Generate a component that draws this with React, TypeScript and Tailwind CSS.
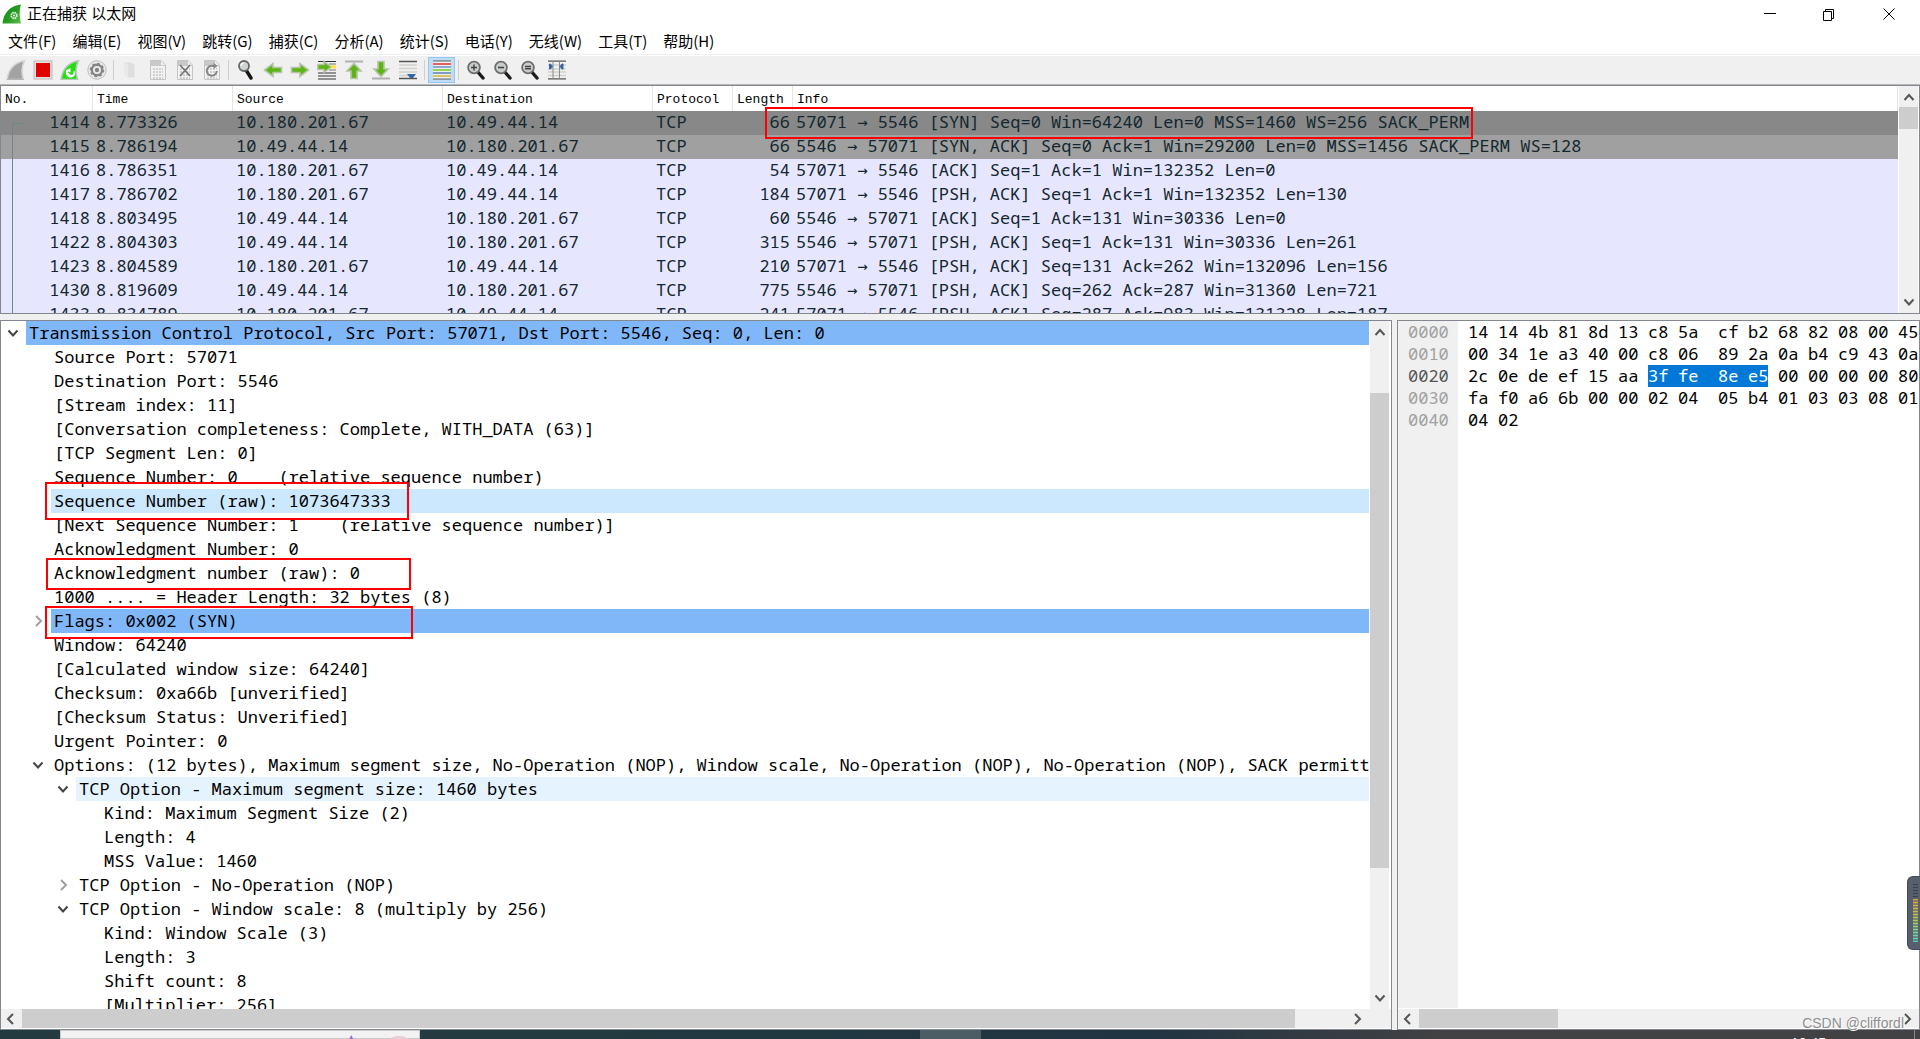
import type { ReactNode } from "react";

type Packet = {
  no: string;
  time: string;
  source: string;
  destination: string;
  length: number;
  info: string;
  row: string;
};

type TreeItem = {
  level: number;
  text: string;
  open?: boolean;
  bg?: string;
};

const HOST_A = "10.180.201.67";
const HOST_B = "10.49.44.14";

const menus = ["文件(F)", "编辑(E)", "视图(V)", "跳转(G)", "捕获(C)", "分析(A)", "统计(S)", "电话(Y)", "无线(W)", "工具(T)", "帮助(H)"];

const columns = [
  { name: "No.", width: "w-[92px]" },
  { name: "Time", width: "w-[140px]" },
  { name: "Source", width: "w-[210px]" },
  { name: "Destination", width: "w-[210px]" },
  { name: "Protocol", width: "w-[80px]" },
  { name: "Length", width: "w-[60px]" },
  { name: "Info", width: "" },
];

const packets: Packet[] = [
  { no: "1414", time: "8.773326", source: HOST_A, destination: HOST_B, length: 66, info: "57071 → 5546 [SYN] Seq=0 Win=64240 Len=0 MSS=1460 WS=256 SACK_PERM", row: "bg-[#888888]" },
  { no: "1415", time: "8.786194", source: HOST_B, destination: HOST_A, length: 66, info: "5546 → 57071 [SYN, ACK] Seq=0 Ack=1 Win=29200 Len=0 MSS=1456 SACK_PERM WS=128", row: "bg-[#a0a0a0]" },
  { no: "1416", time: "8.786351", source: HOST_A, destination: HOST_B, length: 54, info: "57071 → 5546 [ACK] Seq=1 Ack=1 Win=132352 Len=0", row: "bg-[#e7e6ff]" },
  { no: "1417", time: "8.786702", source: HOST_A, destination: HOST_B, length: 184, info: "57071 → 5546 [PSH, ACK] Seq=1 Ack=1 Win=132352 Len=130", row: "bg-[#e7e6ff]" },
  { no: "1418", time: "8.803495", source: HOST_B, destination: HOST_A, length: 60, info: "5546 → 57071 [ACK] Seq=1 Ack=131 Win=30336 Len=0", row: "bg-[#e7e6ff]" },
  { no: "1422", time: "8.804303", source: HOST_B, destination: HOST_A, length: 315, info: "5546 → 57071 [PSH, ACK] Seq=1 Ack=131 Win=30336 Len=261", row: "bg-[#e7e6ff]" },
  { no: "1423", time: "8.804589", source: HOST_A, destination: HOST_B, length: 210, info: "57071 → 5546 [PSH, ACK] Seq=131 Ack=262 Win=132096 Len=156", row: "bg-[#e7e6ff]" },
  { no: "1430", time: "8.819609", source: HOST_B, destination: HOST_A, length: 775, info: "5546 → 57071 [PSH, ACK] Seq=262 Ack=287 Win=31360 Len=721", row: "bg-[#e7e6ff]" },
  { no: "1433", time: "8.834789", source: HOST_A, destination: HOST_B, length: 241, info: "57071 → 5546 [PSH, ACK] Seq=287 Ack=983 Win=131328 Len=187", row: "bg-[#e7e6ff]" },
];

const tree: TreeItem[] = [
  { level: 0, text: "Transmission Control Protocol, Src Port: 57071, Dst Port: 5546, Seq: 0, Len: 0", open: true, bg: "bg-[#80b7f8]" },
  { level: 1, text: "Source Port: 57071" },
  { level: 1, text: "Destination Port: 5546" },
  { level: 1, text: "[Stream index: 11]" },
  { level: 1, text: "[Conversation completeness: Complete, WITH_DATA (63)]" },
  { level: 1, text: "[TCP Segment Len: 0]" },
  { level: 1, text: "Sequence Number: 0    (relative sequence number)" },
  { level: 1, text: "Sequence Number (raw): 1073647333", bg: "bg-[#cce8ff]" },
  { level: 1, text: "[Next Sequence Number: 1    (relative sequence number)]" },
  { level: 1, text: "Acknowledgment Number: 0" },
  { level: 1, text: "Acknowledgment number (raw): 0" },
  { level: 1, text: "1000 .... = Header Length: 32 bytes (8)" },
  { level: 1, text: "Flags: 0x002 (SYN)", open: false, bg: "bg-[#80b7f8]" },
  { level: 1, text: "Window: 64240" },
  { level: 1, text: "[Calculated window size: 64240]" },
  { level: 1, text: "Checksum: 0xa66b [unverified]" },
  { level: 1, text: "[Checksum Status: Unverified]" },
  { level: 1, text: "Urgent Pointer: 0" },
  { level: 1, text: "Options: (12 bytes), Maximum segment size, No-Operation (NOP), Window scale, No-Operation (NOP), No-Operation (NOP), SACK permitted", open: true },
  { level: 2, text: "TCP Option - Maximum segment size: 1460 bytes", open: true, bg: "bg-[#e5f3ff]" },
  { level: 3, text: "Kind: Maximum Segment Size (2)" },
  { level: 3, text: "Length: 4" },
  { level: 3, text: "MSS Value: 1460" },
  { level: 2, text: "TCP Option - No-Operation (NOP)", open: false },
  { level: 2, text: "TCP Option - Window scale: 8 (multiply by 256)", open: true },
  { level: 3, text: "Kind: Window Scale (3)" },
  { level: 3, text: "Length: 3" },
  { level: 3, text: "Shift count: 8" },
  { level: 3, text: "[Multiplier: 256]" },
];

const hexRows = [
  { offset: "0000", bytes: "14 14 4b 81 8d 13 c8 5a cf b2 68 82 08 00 45" },
  { offset: "0010", bytes: "00 34 1e a3 40 00 c8 06 89 2a 0a b4 c9 43 0a" },
  { offset: "0020", bytes: "2c 0e de ef 15 aa 3f fe 8e e5 00 00 00 00 80", from: 6, to: 9 },
  { offset: "0030", bytes: "fa f0 a6 6b 00 00 02 04 05 b4 01 03 03 08 01" },
  { offset: "0040", bytes: "04 02" },
];

const indents = ["pl-0", "pl-[25px]", "pl-[50px]", "pl-[75px]"];

const paths = {
  up: "M1.5 9 L6 4 L10.5 9",
  down: "M1.5 3.5 L6 8.5 L10.5 3.5",
  left: "M9 1 L4 6 L9 11",
  right: "M4 1 L9 6 L4 11",
};

function Chevron({ dir, color = "#555555" }: { dir: keyof typeof paths; color?: string }) {
  return (
    <svg viewBox="0 0 12 12" className="size-3" fill="none" stroke={color} strokeWidth="2">
      <path d={paths[dir]} />
    </svg>
  );
}

function VScroll({ name, className, thumb }: { name: string; className: string; thumb: ReactNode }) {
  return (
    <div className={`flex shrink-0 flex-col border-l border-white bg-[#f0f0f0] ${className}`}>
      <button aria-label={`${name} up`} className="flex h-[21px] shrink-0 items-center justify-center">
        <Chevron dir="up" />
      </button>
      <div className="flex min-h-0 flex-1 flex-col">{thumb}</div>
      <button aria-label={`${name} down`} className="flex h-[21px] shrink-0 items-center justify-center pb-[2px]">
        <Chevron dir="down" />
      </button>
    </div>
  );
}

function HScroll({ name, className = "", thumb }: { name: string; className?: string; thumb: string }) {
  return (
    <div className={`flex h-5 shrink-0 border-b border-white bg-[#f0f0f0] ${className}`}>
      <button aria-label={`${name} left`} className="flex w-[21px] shrink-0 items-center justify-center pr-[3px]">
        <Chevron dir="left" />
      </button>
      <div className="flex-1">
        <div className={`h-full bg-[#cdcdcd] ${thumb}`} />
      </div>
      <button aria-label={`${name} right`} className="flex w-[21px] shrink-0 items-center justify-center pr-[3px]">
        <Chevron dir="right" />
      </button>
    </div>
  );
}

function Tool({ label, active, children }: { label: string; active?: boolean; children: ReactNode }) {
  return (
    <button
      aria-label={label}
      className={`flex h-[26px] w-[27px] items-center justify-center ${active ? "border border-[#90c8f6] bg-[#c0dcf3]" : ""}`}
    >
      <svg viewBox="0 0 20 20" className="size-5 shrink-0" fill="none">
        {children}
      </svg>
    </button>
  );
}

function Separator() {
  return <div className="mx-[3px] h-5 w-px bg-[#cfcfcf]" />;
}

function Page({ children }: { children?: ReactNode }) {
  return (
    <>
      <path d="M2.5 .5 H13 L17.5 5 V19.5 H2.5 Z" fill="#f2f2f2" stroke="#c4c4c4" />
      <path d="M2.5 1 H13 V5 H17 V6 H2.5 Z" fill="#c9c9c9" />
      <path d="M5 9 H15 M5 12 H15 M5 15 H15 M5 18 H15" stroke="#cfcfcf" strokeWidth="2" strokeDasharray="2 1" />
      {children}
    </>
  );
}

function Lens({ children }: { children?: ReactNode }) {
  return (
    <>
      <path d="M11 11 L17 18" stroke="#1c1c1c" strokeWidth="3.4" strokeLinecap="round" />
      <circle cx="8" cy="7.5" r="5.9" fill="#c9cccc" stroke="#6d6d6d" strokeWidth="1.8" />
      {children}
    </>
  );
}

const fin = "M1 19.5 C2.5 10 8 2.5 18.5 .8 C15.5 6 15.5 13 17.5 19.5 Z";
const rightArrow = "M1.5 7.5 H10 V3.5 L18.5 10 L10 16.5 V12.5 H1.5 Z";

function Toolbar() {
  return (
    <div className="flex h-7 shrink-0 items-center bg-[#f0f0f0] pl-[2px]">
      <Tool label="开始捕获分组">
        <path d={fin} fill="#a3a3a3" stroke="#d6d6d6" strokeWidth="1.6" />
        <path d="M1 19.5 H18" stroke="#b5b5b5" />
      </Tool>
      <Tool label="停止捕获分组">
        <rect x="1" y="1" width="18" height="18" fill="#e9dede" stroke="#bdb9b9" />
        <rect x="3" y="3" width="14" height="14" fill="#e00000" />
      </Tool>
      <Tool label="重新开始当前捕获">
        <path d={fin} fill="#22e010" stroke="#bcc6bc" strokeWidth="1.6" />
        <path d="M8.2 10 A3.7 3.7 0 1 0 14 11.5 M13.8 15 A3.7 3.7 0 0 1 8 13" stroke="#fff" strokeWidth="1.8" />
        <path d="M6 10.5 L10.5 8 L10.5 12.5 Z" fill="#fff" />
      </Tool>
      <Tool label="捕获选项">
        <circle cx="10" cy="10" r="9.2" fill="#ececec" stroke="#bbbbbb" />
        <circle cx="10" cy="10" r="5.2" stroke="#858585" strokeWidth="2.4" />
        <circle cx="10" cy="10" r="6.6" stroke="#858585" strokeWidth="1.4" strokeDasharray="2.6 2.58" />
        <circle cx="10" cy="10" r="2.2" fill="#858585" />
      </Tool>
      <Separator />
      <Tool label="打开已保存的捕获文件">
        <path d="M3 2.5 H10 L13.5 5 V17.5 H6 Z" fill="#dedede" />
        <path d="M3 2.5 L7 5 V17.5 L3 15.5 Z" fill="#e9e9e9" />
      </Tool>
      <Tool label="保存捕获文件">
        <Page />
      </Tool>
      <Tool label="关闭捕获文件">
        <Page>
          <path d="M5 5 L15 16 M15 5 L5 16" stroke="#777" strokeWidth="1.8" />
        </Page>
      </Tool>
      <Tool label="重新加载文件">
        <Page>
          <path d="M14.8 11 A5 5 0 1 1 11 6 H14.5" stroke="#868686" strokeWidth="2" />
          <path d="M11.5 2.8 L15.5 6 L11.5 9 Z" fill="#868686" />
        </Page>
      </Tool>
      <Separator />
      <Tool label="查找分组">
        <path d="M10 10 L15 18" stroke="#151515" strokeWidth="3.4" strokeLinecap="round" />
        <circle cx="8" cy="6" r="5" fill="#d0d3d3" stroke="#666" strokeWidth="1.8" />
        <path d="M5 6 A3 3 0 0 1 8 3.2" stroke="#fff" strokeWidth="1.2" />
      </Tool>
      <Tool label="前一个分组">
        <path d="M18.5 7.5 H10 V3.5 L1.5 10 L10 16.5 V12.5 H18.5 Z" fill="#5db515" stroke="#b4c4a6" strokeWidth="1.6" />
      </Tool>
      <Tool label="后一个分组">
        <path d={rightArrow} fill="#5db515" stroke="#b4c4a6" strokeWidth="1.6" />
      </Tool>
      <Tool label="转到指定分组">
        <path d="M1 1.5 H19 M1 13 H19 M1 16 H19 M1 19 H19" stroke="#333" strokeWidth="1.2" />
        <path d="M12 4 H19 M12 10 H19" stroke="#777" />
        <path d="M12 6.8 H19" stroke="#ffe23d" strokeWidth="3" />
        <path d="M.8 4.5 H7 V1.5 L14 7 L7 12.5 V9.5 H.8 Z" fill="#5db515" stroke="#b4c4a6" strokeWidth="1.4" />
      </Tool>
      <Tool label="首个分组">
        <path d="M1 1.5 H19" stroke="#b0b0b0" strokeWidth="2" />
        <path d="M7 18.5 V11 H3 L10 3.5 L17 11 H13 V18.5 Z" fill="#5db515" stroke="#b4c4a6" strokeWidth="1.6" />
      </Tool>
      <Tool label="最新分组">
        <path d="M1 18.5 H19" stroke="#b0b0b0" strokeWidth="2" />
        <path d="M7 1.5 V9 H3 L10 16.5 L17 9 H13 V1.5 Z" fill="#5db515" stroke="#b4c4a6" strokeWidth="1.6" />
      </Tool>
      <Tool label="自动滚动">
        <path d="M1 1.5 H19 M1 18.5 H19" stroke="#555" strokeWidth="1.4" />
        <path d="M1 5 H19 M1 8.5 H19 M1 12 H19 M1 15.5 H10" stroke="#cfd0ca" strokeWidth="1.4" />
        <path d="M9 14 H18 L15 18 H12 Z" fill="#3465a4" />
      </Tool>
      <Separator />
      <Tool label="着色分组" active>
        <path d="M1 1 H19 M1 19 H19" stroke="#555" strokeWidth="1.2" />
        <path d="M1 2.5 H19 M1 5.5 H19 M1 8.5 H19 M1 11.5 H19 M1 14.5 H19 M1 17.5 H19" stroke="#eeeeec" strokeWidth="1.6" />
        <path d="M1 4 H19" stroke="#ef2929" strokeWidth="1.4" />
        <path d="M1 7 H19" stroke="#6f93c6" strokeWidth="1.4" />
        <path d="M1 10 H19" stroke="#73d216" strokeWidth="1.4" />
        <path d="M1 13 H19" stroke="#5b7fb5" strokeWidth="1.4" />
        <path d="M1 16 H19" stroke="#d9b92c" strokeWidth="1.4" />
      </Tool>
      <Separator />
      <Tool label="放大">
        <Lens>
          <path d="M5 7.5 H11 M8 4.5 V10.5" stroke="#444" strokeWidth="1.5" />
        </Lens>
      </Tool>
      <Tool label="缩小">
        <Lens>
          <path d="M5 7.5 H11" stroke="#444" strokeWidth="1.6" />
        </Lens>
      </Tool>
      <Tool label="正常大小">
        <Lens>
          <path d="M5 6.5 H11 M5 8.7 H11" stroke="#444" strokeWidth="1.4" />
        </Lens>
      </Tool>
      <Tool label="调整列宽">
        <path d="M1 1.2 H19 M1 18.8 H19" stroke="#555" strokeWidth="1.3" />
        <path d="M1 5 H19 M1 9 H19 M1 12 H19 M1 15.5 H19" stroke="#cfd0ca" strokeWidth="1.3" />
        <path d="M6 1 V19 M12.5 1 V19" stroke="#8a8a8a" />
        <path d="M2.5 4 H3.5 L5.5 6.5 L3.5 9 H2.5 Z M16 4 H15 L13 6.5 L15 9 H16 Z" fill="#3465a4" stroke="#3465a4" />
      </Tool>
    </div>
  );
}

function TitleBar() {
  return (
    <header className="flex h-7 shrink-0 items-center">
      <svg viewBox="0 0 20 20" className="ml-[2px] size-5">
        <defs>
          <linearGradient id="finGreen" x1="0" y1="0" x2="1" y2="1">
            <stop offset="0" stopColor="#0c8a12" />
            <stop offset=".6" stopColor="#2a9d24" />
            <stop offset="1" stopColor="#63c257" />
          </linearGradient>
        </defs>
        <path d="M.5 19.5 C1.5 9 8 1.5 19 .5 C17 6 17.5 13 19 19.5 Z" fill="url(#finGreen)" />
        <circle cx="12" cy="11.5" r="2.8" fill="none" stroke="#e3f3df" strokeWidth="1.8" strokeDasharray="1.6 .6" />
        <circle cx="12" cy="11.5" r="1.1" fill="#e3f3df" />
      </svg>
      <h1 className="ml-[5px] flex-1 text-[15px] leading-5">正在捕获 以太网</h1>
      <button aria-label="最小化" className="flex h-full w-[58px] items-center justify-center">
        <svg viewBox="0 0 12 12" className="size-3" stroke="#000">
          <path d="M0 5.5 H12" />
        </svg>
      </button>
      <button aria-label="还原" className="flex h-full w-[58px] items-center justify-center">
        <svg viewBox="0 0 13 13" className="size-[13px]" fill="none" stroke="#000">
          <path d="M1.5 3.5 H9.5 V12.5 H1.5 Z M3.5 3 V1.5 H11.5 V10.5 H10" />
        </svg>
      </button>
      <button aria-label="关闭" className="flex h-full w-[63px] items-center justify-center">
        <svg viewBox="0 0 12 12" className="size-3" stroke="#000">
          <path d="M.5 .5 L11.5 11.5 M11.5 .5 L.5 11.5" />
        </svg>
      </button>
    </header>
  );
}

function Info({ text }: { text: string }) {
  const [from, to] = text.split("→");
  return (
    <>
      {from}
      <span className="font-['DejaVu_Sans_Mono',monospace]">→</span>
      {to}
    </>
  );
}

function PacketList() {
  return (
    <section className="relative flex h-[229px] shrink-0 border border-[#828790]">
      <div className="min-w-0 flex-1 overflow-hidden">
        <table className="w-full table-fixed border-separate border-spacing-0 whitespace-pre">
          <thead className="font-['Liberation_Mono',monospace] text-[13px] leading-4">
            <tr className="h-[25px]">
              {columns.map((c) => (
                <th key={c.name} className={`${c.width} border-r border-[#e5e5e5] p-0 pl-1 pt-[2px] text-left font-normal`}>
                  {c.name}
                </th>
              ))}
            </tr>
          </thead>
          <tbody className="leading-[22px] text-[#12272e] *:*:p-0 *:*:align-top">
            {packets.map((p) => (
              <tr key={p.no} className={`h-6 ${p.row}`}>
                <td className="!pr-[3px] text-right">{p.no}</td>
                <td className="!pl-[3px]">{p.time}</td>
                <td className="!pl-[3px]">{p.source}</td>
                <td className="!pl-[3px]">{p.destination}</td>
                <td className="!pl-[3px]">TCP</td>
                <td className="!pr-[3px] text-right">{p.length}</td>
                <td className="!pl-[3px]">
                  <Info text={p.info} />
                </td>
              </tr>
            ))}
          </tbody>
        </table>
      </div>
      <VScroll name="packets" className="w-[21px] border-r" thumb={<div className="h-[22px] bg-[#cdcdcd]" />} />
      <div className="absolute bottom-0 left-[11px] top-[37px] w-[11px] border-l border-t border-[#70858c]" />
      <div className="absolute left-[764px] top-[21px] h-8 w-[708px] border-2 border-[#ff0000]" />
    </section>
  );
}

function TreeRow({ item }: { item: TreeItem }) {
  return (
    <li className={`flex h-6 ${indents[item.level]}`}>
      <span className="flex w-[25px] shrink-0 items-center justify-center pr-[2px]">
        {item.open !== undefined && (
          <button aria-label={item.text} aria-expanded={item.open} className="flex">
            <Chevron dir={item.open ? "down" : "right"} color={item.open ? "#444444" : "#a0a0a0"} />
          </button>
        )}
      </span>
      <span className={`min-w-0 flex-1 overflow-hidden whitespace-pre pl-[3px] ${item.bg ?? ""}`}>{item.text}</span>
    </li>
  );
}

function PacketDetails() {
  return (
    <section className="flex w-[72.5%] flex-col border border-[#828790]">
      <div className="flex min-h-0 flex-1">
        <div className="relative min-w-0 flex-1 overflow-hidden">
          <ul className="leading-6">
            {tree.map((item, i) => (
              <TreeRow key={i} item={item} />
            ))}
          </ul>
          <div className="absolute left-11 top-[161px] h-[38px] w-[364px] border-2 border-[#ff0000]" />
          <div className="absolute left-[45px] top-[237px] h-8 w-[365px] border-2 border-[#ff0000]" />
          <div className="absolute left-11 top-[285px] h-[33px] w-[368px] border-2 border-[#ff0000]" />
        </div>
        <VScroll
          name="details"
          className="w-[22px] border-r-2"
          thumb={
            <>
              <div className="h-[51px]" />
              <div className="h-[73.5%] bg-[#cdcdcd]" />
            </>
          }
        />
      </div>
      <HScroll name="details" className="pr-[22px]" thumb="w-[96%]" />
    </section>
  );
}

function PacketBytes() {
  return (
    <section className="flex min-w-0 flex-1 flex-col border border-[#828790]">
      <div className="flex min-h-0 flex-1 overflow-hidden border-b border-white leading-[22px]">
        <div className="w-[60px] shrink-0 bg-[#f0f0f0] pl-[10px]">
          {hexRows.map((r) => (
            <div key={r.offset} className={r.from ? "text-[#555555]" : "text-[#a0a0a0]"}>
              {r.offset}
            </div>
          ))}
        </div>
        <div className="min-w-0 pl-[10px]">
          {hexRows.map((r) => (
            <div key={r.offset} className="flex">
              {r.bytes.split(" ").map((b, i) => {
                const marked = r.from !== undefined && i >= r.from && i <= r.to;
                const last = marked && i === r.to;
                return (
                  <span
                    key={i}
                    className={`shrink-0 ${i === 7 ? "w-10" : last ? "mr-[10px] w-5" : "w-[30px]"} ${marked ? "bg-[#0078d7] text-white" : ""}`}
                  >
                    {b}
                  </span>
                );
              })}
            </div>
          ))}
        </div>
      </div>
      <HScroll name="bytes" thumb="w-[29%]" />
    </section>
  );
}

function Taskbar() {
  return (
    <footer className="flex h-[9px] shrink-0 overflow-hidden bg-linear-to-r from-[#223a40] from-30% via-[#213442] via-60% to-[#424143] to-75%">
      <div className="ml-[60px] flex w-[360px] justify-end border border-[#c8c8c8] bg-[#f2f2f2]">
        <svg viewBox="0 0 72 8" className="h-2 w-[72px]">
          <path d="M2 8 L4.500 4 L6 8 Z" fill="#a06fc8" />
          <ellipse cx="52" cy="9" rx="9" ry="4" fill="#e6cfd2" />
        </svg>
      </div>
      <div className="ml-[500px] w-[61px] bg-[#4c5d65]" />
      <div className="ml-auto mr-[88px] pt-[6px] text-[14px] leading-none text-white">10:45</div>
      <div className="mr-[5px] w-px bg-[#8a8a8a]" />
    </footer>
  );
}

export default function App() {
  return (
    <div className="relative flex h-screen flex-col overflow-hidden bg-white font-['Liberation_Sans','Noto_Sans_CJK_SC',sans-serif] text-black">
      <TitleBar />
      <nav className="flex h-[26px] shrink-0 items-center gap-4 pl-2 font-['Noto_Sans_CJK_SC',sans-serif] text-[15px] leading-5">
        {menus.map((m) => (
          <button key={m}>{m}</button>
        ))}
      </nav>
      <div className="h-[2px] shrink-0 border-t border-[#f0f0f0]" />
      <Toolbar />
      <main className="flex min-h-0 flex-1 flex-col gap-[6px] border-t border-[#b8b8b8] bg-[#f0f0f0] font-['Noto_Sans_Mono','Liberation_Mono',monospace] text-[17px] *:bg-white">
        <PacketList />
        <div className="flex min-h-0 flex-1 gap-[5px] !bg-[#f0f0f0] *:bg-white">
          <PacketDetails />
          <PacketBytes />
        </div>
      </main>
      <Taskbar />
      <div className="absolute bottom-[89px] right-0 flex h-[74px] w-[13px] flex-col items-end justify-center rounded-l-md border border-r-0 border-[#454b58] bg-[#575e6e] pr-[2px]">
        <div className="h-[15px] w-[5px] bg-[repeating-linear-gradient(#3b404c_0_1px,#575e6e_1px_3px)]" />
        <div className="flex h-[43px] w-[5px] bg-linear-to-b from-[#e0a23c] via-[#a9cf52] to-[#4fd3bd]">
          <div className="flex-1 bg-[repeating-linear-gradient(transparent_0_1px,#575e6e99_1px_3px)]" />
        </div>
      </div>
      <p className="absolute bottom-2 right-4 text-[14px] leading-4 text-[#8f8f8f] [text-shadow:1px_1px_0_#ffffff]">CSDN @cliffordl</p>
    </div>
  );
}
